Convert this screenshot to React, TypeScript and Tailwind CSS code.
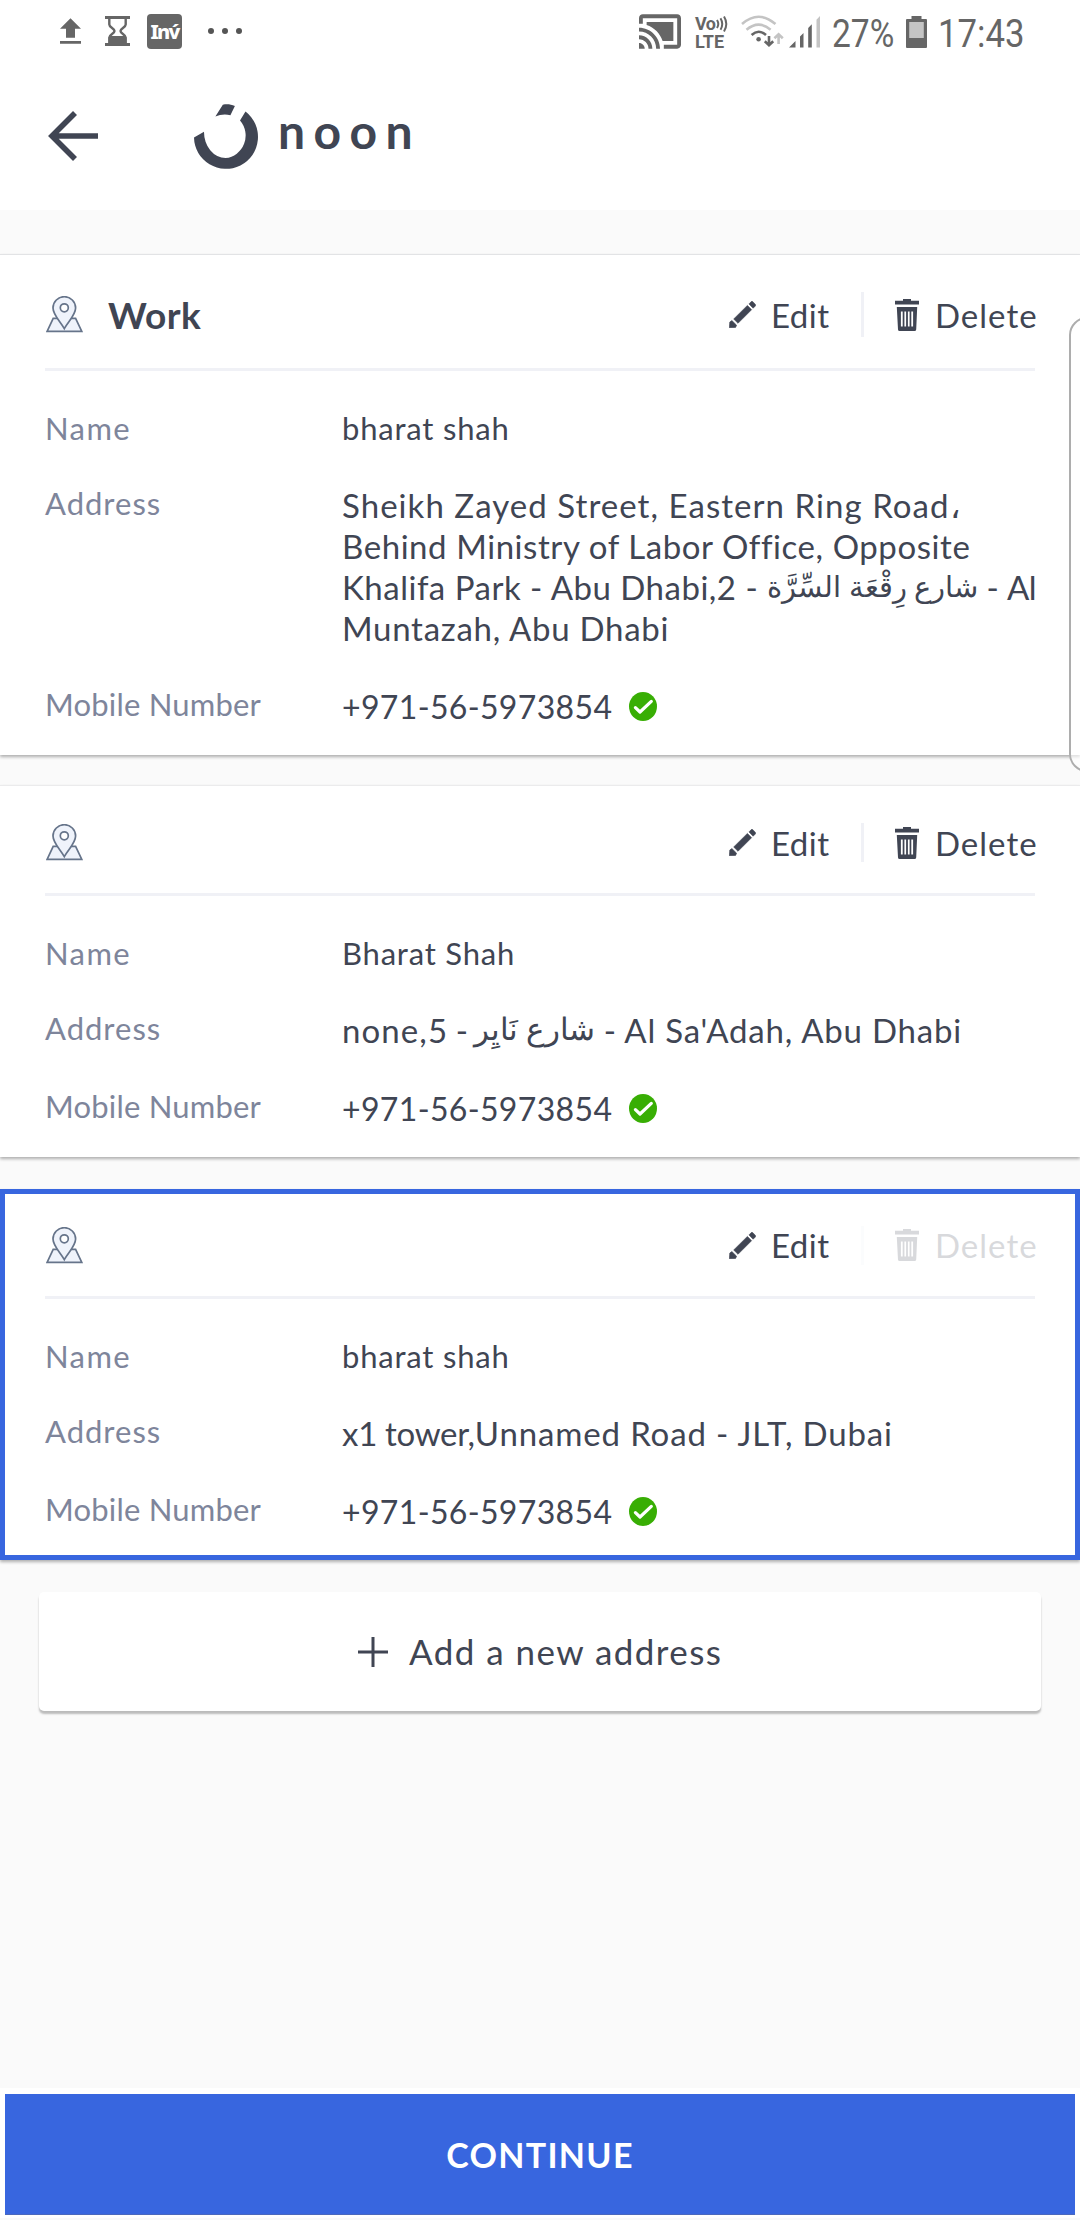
import type { ReactNode } from "react";

function PinIcon() {
  return (
    <svg className="ml-px" width="37" height="37" viewBox="0 0 37 37" fill="#eff3fb" stroke="#66748a" strokeWidth="1.7">
      <path d="M7.2 22.4H29.6L35.8 35.4H1.1Z" />
      <path d="M18.3 32.6C14.5 25.5 7 19 7 12A11.3 11.3 0 0 1 29.6 12C29.6 19 22.1 25.5 18.3 32.6Z" />
      <circle cx="18.3" cy="11.8" r="4" fill="#fff" />
    </svg>
  );
}

function PencilIcon() {
  return (
    <svg className="shrink-0" width="27" height="27" viewBox="0 0 27 27" fill="currentColor" stroke="currentColor" strokeWidth="0.6">
      <path d="M20 2.9 22.3.6Q23 0 23.8.7L26.4 3.4Q27 4.2 26.4 4.9L24.1 7.2Z" />
      <path d="M18.4 4.4 22.6 8.7 9 22.3 4.7 18Z" />
      <path d="M2.9 19.5 7.6 24.2 6.6 26.4 0.3 26.7 .8 21Z" />
    </svg>
  );
}

function TrashIcon() {
  return (
    <svg className="shrink-0" width="24" height="32" viewBox="0 0 24 32" fill="currentColor">
      <path d="M8 0H16V1.7H24V5.6H0V1.7H8Z" />
      <path
        fillRule="evenodd"
        d="M1.8 8H22.2L21.2 30.4Q21 32 19.6 32H4.6Q3.1 32 3 30.4ZM5.9 12.4V27.4H7.7V12.4ZM9.4 12.4V27.4H11.1V12.4ZM12.9 12.4V27.4H14.6V12.4ZM16.3 12.4V27.4H18.1V12.4Z"
      />
    </svg>
  );
}

function VerifiedIcon() {
  return (
    <svg className="absolute left-[287px] top-[6px]" width="28" height="29" viewBox="0 0 28 29">
      <ellipse cx="14" cy="14.5" rx="14" ry="14.5" fill="#38ae04" />
      <path d="M6.4 15.6 11 20 22.3 9.4" fill="none" stroke="#fff" strokeWidth="3.2" strokeLinecap="round" strokeLinejoin="round" />
    </svg>
  );
}

function StatusBar() {
  return (
    <div className="flex h-[60px] shrink-0 items-start text-[#666]">
      <svg className="ml-[60px] mt-[18px]" width="21" height="26" viewBox="5 3 14 17" fill="currentColor">
        <path d="M9 16h6v-6h4l-7-7-7 7h4zM5 18.2h14V20H5z" />
      </svg>
      <svg className="ml-[24px] mt-[16px]" width="25" height="30" viewBox="0 0 25 30">
        <path d="M0 0H25V3H0ZM0 27H25V30H0Z" fill="currentColor" />
        <path d="M4.3 2V8.5C4.3 11.5 9.5 12.5 9.5 15S4.3 18.5 4.3 21.5V28H20.7V21.5C20.7 18.5 15.5 17.5 15.5 15S20.7 11.5 20.7 8.5V2" fill="none" stroke="currentColor" strokeWidth="2.4" />
        <path d="M4.5 20H20.5V28H4.5Z" fill="currentColor" />
      </svg>
      <div className="ml-[17px] mt-[14px] flex h-[35px] w-[35px] items-center justify-center rounded-[4px] bg-[#666] font-['Noto_Sans'] text-[20px] font-extrabold leading-none tracking-[-1.8px] text-white">
        Inv́
      </div>
      <svg className="ml-[26px] mt-[26px]" width="34" height="10" viewBox="0 0 34 10" fill="#555">
        <circle cx="3" cy="5" r="3" />
        <circle cx="17" cy="5" r="3" />
        <circle cx="31" cy="5" r="3" />
      </svg>
      <svg className="ml-auto mt-[14px]" width="42" height="35" viewBox="1 3 22 18" fill="currentColor">
        <path d="M1 18v3h3c0-1.660-1.340-3-3-3zm0-4v2c2.760 0 5 2.240 5 5h2c0-3.870-3.130-7-7-7zm18-7H5v1.630c3.960 1.280 7.090 4.410 8.370 8.370H19V7zM1 10v2c4.970 0 9 4.030 9 9h2c0-6.080-4.930-11-11-11zm20-7H3c-1.100 0-2 .9-2 2v3h2V5h18v14h-7v2h7c1.100 0 2-.9 2-2V5c0-1.100-.9-2-2-2z" />
      </svg>
      <div className="ml-[14px] mt-[15px] flex w-[33px] flex-col font-[Roboto] text-[18px] font-bold leading-[18px]">
        <div className="flex h-[18px]">
          <span className="tracking-[-0.5px]">Vo</span>
          <svg width="12" height="18" viewBox="0 0 12 18" fill="none" stroke="currentColor" strokeWidth="2">
            <path d="M1 5Q3.600 9 1 13M4.500 3.300Q8 9 4.500 14.800M8 1.500Q12.600 9 8 16.500" />
          </svg>
        </div>
        <span>LTE</span>
      </div>
      <svg className="ml-[13px] mt-[14px]" width="43" height="34" viewBox="0 0 43 34" fill="none" strokeWidth="2.6">
        <path d="M1 10Q17.600-4.500 34.500 10M5.500 15.800Q17.600 5.500 29.600 15.800" stroke="#c4c4c4" />
        <path d="M10.600 21Q17.600 14.500 25 21" stroke="#666" />
        <circle cx="17.600" cy="25.300" r="2.300" fill="#666" />
        <path d="M28 22V31M23.800 27.300 28 31.300 32.200 27.300" stroke="#666" />
        <path d="M37.600 30V21M33.400 24.300 37.600 20.300 41.800 24.300" stroke="#c4c4c4" />
      </svg>
      <svg className="ml-[5px] mt-[16px]" width="32" height="32" viewBox="0 0 32 32" fill="#666">
        <path d="M0 31.500 6.500 25V31.500ZM11 20.500 14.500 17V31.500H11ZM19.200 12 22.800 8.300V31.500H19.200Z" />
        <path d="M27.500 3.800 31 0V31.500H27.500Z" fill="#c4c4c4" />
      </svg>
      <div className="ml-[11px] mt-[12px] w-[74px] font-[Roboto] text-[39px] leading-[44px]">
        <span className="inline-block origin-left scale-x-[0.86]">27%</span>
      </div>
      <svg className="mt-[16px]" width="21" height="32" viewBox="0 0 21 32">
        <path d="M5.500 0H15.500V3H20Q21 3 21 4V31Q21 32 20 32H1Q0 32 0 31V4Q0 3 1 3H5.500Z" fill="#666" />
        <path d="M3.200 6H17.800V22H3.200Z" fill="#c4c4c4" />
      </svg>
      <div className="ml-[11px] mr-[57px] mt-[12px] w-[85px] font-[Roboto] text-[39px] leading-[44px]">
        <span className="inline-block origin-left scale-x-[0.89]">17:43</span>
      </div>
    </div>
  );
}

function AppHeader() {
  return (
    <header className="flex h-[150px] shrink-0 items-start text-[#404553]">
      <svg className="ml-[48px] mt-[50px]" width="50" height="52" viewBox="0 0 50 52" fill="none" stroke="currentColor" strokeWidth="5.600">
        <path d="M27 3 4 26 27 49M4 26H50" />
      </svg>
      <svg className="ml-[96px] mt-[43px]" width="64" height="66" viewBox="0 0 64 66" fill="currentColor">
        <path d="M28.800 1.800C33 .8 37 1.500 40.900 3L36.400 12.300C31.500 10.900 26 11.500 21.400 13.600Z" />
        <path d="M51.500 8.500A32 32 0 1 1 0 34.500L10 28.700A21.800 26 0 0 0 31.600 55A21.800 22.500 0 0 0 46 17.500Z" />
      </svg>
      <span className="ml-[20px] mt-[41px] font-[Lato] text-[48px] font-bold leading-[60px] tracking-[8.400px]">noon</span>
    </header>
  );
}

type Address = {
  title?: string;
  name: string;
  lines: ReactNode[];
  selected?: boolean;
};

const phone = "+971-56-5973854";

const addresses: Address[] = [
  {
    title: "Work",
    name: "bharat shah",
    lines: [
      <span className="tracking-[1.050px]">Sheikh Zayed Street, Eastern Ring Road،</span>,
      <span className="tracking-[0.570px]">Behind Ministry of Labor Office, Opposite</span>,
      <>
        <span className="tracking-[0.500px]">Khalifa Park - Abu Dhabi,2 - </span>
        <span className="relative -top-[3px] text-[29px]">شارع رِقْعَة السِّرَّة</span>
        <span className="tracking-[-0.600px]"> - Al</span>
      </>,
      <span className="tracking-[0.730px]">Muntazah, Abu Dhabi</span>,
    ],
  },
  {
    name: "Bharat Shah",
    lines: [
      <>
        <span className="tracking-[1.100px]">none,5</span>
        <span className="tracking-[-1px]"> - </span>
        <span className="relative -top-[3px] text-[30.600px]">شارع نَايِر</span>
        <span className="tracking-[0.800px]"> - Al Sa'Adah, Abu Dhabi</span>
      </>,
    ],
  },
  {
    name: "bharat shah",
    selected: true,
    lines: [
      <>
        <span className="tracking-[-0.300px]">x1 tower,</span>
        <span className="tracking-[0.850px]">Unnamed Road - JLT, Dubai</span>
      </>,
    ],
  },
];

function AddressCard({ title, name, lines, selected }: Address) {
  const frame = selected
    ? "mt-[32px] border-[5px] border-[#3866df] px-[40px] pb-[23px]"
    : title
      ? "mt-[44px] border-t border-[#e2e3e5] px-[45px] pb-[28px]"
      : "mt-[30px] border-t border-[#ebebec] px-[45px] pb-[28px]";
  const head = selected ? "h-[105px]" : title ? "h-[116px] pt-[6px]" : "h-[110px] pt-[6px]";
  return (
    <section className={`shrink-0 bg-white shadow-[0_2px_3px_rgba(0,0,0,0.3)] ${frame}`}>
      <div className={`flex items-center border-b-[3px] border-[#f0f1f6] ${head}`}>
        <PinIcon />
        {title && <h2 className="ml-[25px] text-[37px] font-bold leading-[44px] tracking-[0.400px]">{title}</h2>}
        <div className="ml-auto flex items-center text-[33px] leading-[40px]">
          <PencilIcon />
          <span className="ml-[15px] w-[90px] tracking-[0.500px]">Edit</span>
          <div className={`flex items-center ${selected ? "opacity-20" : ""}`}>
            <div className={`w-[3px] bg-[#f0f1f6] ${title ? "h-[45px]" : "h-[39px]"}`} />
            <span className="ml-[31px]"><TrashIcon /></span>
            <span className="ml-[16px] w-[100px] whitespace-nowrap tracking-[1px]">Delete</span>
          </div>
        </div>
      </div>
      <dl className="grid grid-cols-[297px_1fr] gap-y-[37px] pt-[36px] text-[31px]">
        <dt className="h-[41px] leading-[43px] tracking-[1.400px] text-[#7e859b]">Name</dt>
        <dd className="h-[41px] leading-[43px] tracking-[0.800px]">{name}</dd>
        <dt className="leading-[36px] tracking-[1px] text-[#7e859b]">Address</dt>
        <dd className="text-[33px] leading-[41px]">
          {lines.map((line, i) => (
            <div key={i} className="h-[41px] whitespace-nowrap">{line}</div>
          ))}
        </dd>
        <dt className="leading-[36px] tracking-[0.200px] text-[#7e859b]">Mobile Number</dt>
        <dd className="relative text-[32px] leading-[41px] tracking-[0.350px]">
          {phone}
          <VerifiedIcon />
        </dd>
      </dl>
    </section>
  );
}

export default function App() {
  return (
    <div className="relative flex h-[2220px] w-[1080px] flex-col overflow-hidden bg-[#fafafa] font-[Lato,sans-serif] text-[#404553]">
      <div className="shrink-0 bg-white">
        <StatusBar />
        <AppHeader />
      </div>
      {addresses.map((a, i) => (
        <AddressCard key={i} {...a} />
      ))}
      <button className="mx-[39px] mt-[32px] flex h-[119px] shrink-0 items-center rounded-[5px] bg-white pl-[319px] shadow-[0_3px_2px_rgba(0,0,0,0.25)]">
        <svg width="30" height="30" viewBox="0 0 30 30" stroke="currentColor" strokeWidth="3">
          <path d="M15 0V30M0 15H30" />
        </svg>
        <span className="-mt-[2px] ml-[21px] text-[35px] leading-[42px] tracking-[1.450px]">Add a new address</span>
      </button>
      <div className="mb-[2px] mt-auto bg-white px-[5px] pb-[3px] pt-[6px]">
        <button className="flex h-[121px] w-full items-center justify-center border-b border-[#4a68bd] bg-[#3866df] text-[34px] font-bold tracking-[1.300px] text-white">
          CONTINUE
        </button>
      </div>
      <div className="absolute left-[1069px] top-[317px] h-[455px] w-[40px] rounded-[18px] border-2 border-[#adadad] bg-white/60" />
    </div>
  );
}
